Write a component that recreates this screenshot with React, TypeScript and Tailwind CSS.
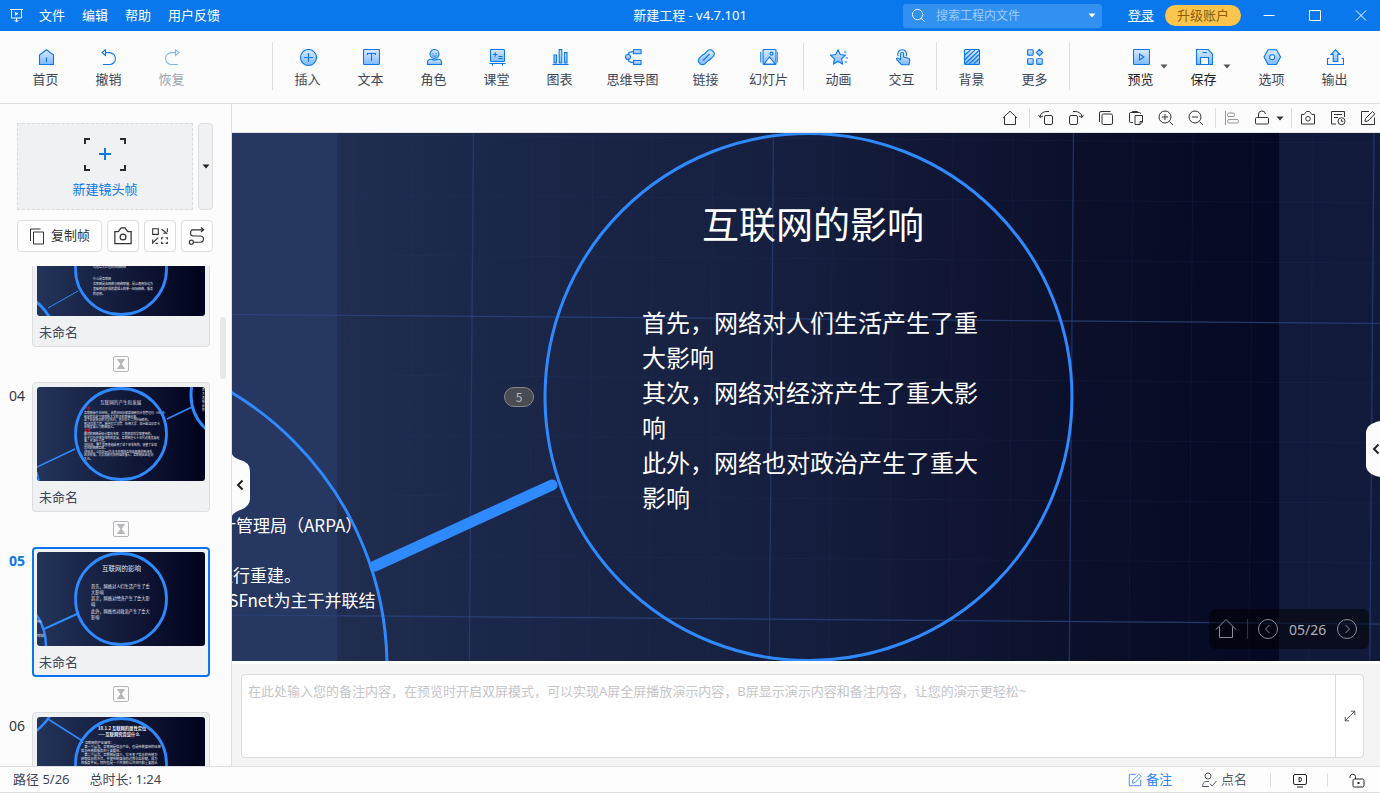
import type { ReactNode } from "react";

const BLUE = "#0a78ec";
const ARC = "#2f89ff";

/* ---------- toolbar icons ---------- */

function Duo({ children }: { children: ReactNode }) {
  return (
    <svg width="18" height="18" viewBox="0 0 18 18" fill="none" stroke={BLUE} strokeWidth="1.1" aria-hidden="true">
      {children}
    </svg>
  );
}

const FILL = "url(#duo)";

const icons: Record<string, ReactNode> = {
  home: (
    <Duo>
      <path d="M2.5 6 9.5.7 16.5 6v9.5h-14z" fill={FILL} />
      <path d="M9.5 8.5v4.5" />
    </Duo>
  ),
  undo: (
    <Duo>
      <path d="M5.5.8 2 3.6l3.5 2.9z" />
      <path d="M5.5 3.6h4a5.9 5.9 0 0 1 0 11.9H3" />
    </Duo>
  ),
  redo: (
    <Duo>
      <path d="M12.5.8 16 3.6l-3.5 2.9z" />
      <path d="M12.5 3.6h-4a5.9 5.9 0 0 0 0 11.9H15" />
    </Duo>
  ),
  insert: (
    <Duo>
      <circle cx="9.5" cy="8.5" r="8" fill={FILL} />
      <path d="M9.5 4v9M5 8.5h9" />
    </Duo>
  ),
  text: (
    <Duo>
      <rect x="1.5" y=".5" width="16" height="15" rx="1" fill={FILL} />
      <path d="M5.5 6V4.5h8V6M9.5 4.5V12" />
    </Duo>
  ),
  role: (
    <Duo>
      <circle cx="9.5" cy="5" r="4.5" fill={FILL} />
      <path d="M8 4v1.2M11 4v1.2M7.6 6.6q1.9 1.6 3.8 0" strokeWidth=".9" />
      <path d="M2.5 15.5v-2.2a3 3 0 0 1 3-3h1q3 1.6 6 0h1a3 3 0 0 1 3 3v2.2z" fill={FILL} />
    </Duo>
  ),
  lesson: (
    <Duo>
      <rect x="2.5" y=".5" width="14" height="12" rx="1" fill={FILL} />
      <path d="M5 5.5h4.5M7.2 3.2v4.6M10.5 7.5h4M10.5 9.5h4M1.5 14.5h16M4.5 14.5v2.3M14.5 14.5v2.3" />
    </Duo>
  ),
  chart: (
    <Duo>
      <path d="M3 6h2.6v8H3zM8.2.6h2.6V14H8.2zM13.4 3.6H16V14h-2.6z" fill={FILL} />
      <path d="M1.5 15.5h16" />
    </Duo>
  ),
  mind: (
    <Duo>
      <rect x="9.5" y=".7" width="7.5" height="4" fill={FILL} />
      <rect x="9.5" y="11.5" width="7.5" height="4" fill={FILL} />
      <circle cx="4" cy="8" r="2.5" fill={FILL} />
      <path d="M9.5 2.6C6 2.6 4.5 3.5 4 5.5M9.5 13.5C6 13.5 4.5 12.5 4 10.5" />
    </Duo>
  ),
  link: (
    <Duo>
      <path d="m2.3 9.2 3-3a3 3 0 0 1 1.7-.8l3.6-3.6a3.5 3.5 0 0 1 5 0l.7.8a3.5 3.5 0 0 1 0 4.7L13 10.5a3 3 0 0 1-1.7.9l-3.5 3.4a3.3 3.3 0 0 1-4.7 0l-.8-.9a3.3 3.3 0 0 1 0-4.7z" fill={FILL} />
      <path d="m6 11.5 6.5-6.5" />
    </Duo>
  ),
  slides: (
    <Duo>
      <rect x="3" y=".5" width="13" height="15" rx="1" fill={FILL} />
      <path d="m4 15 5.5-7 5.5 7z" fill="#fcfcfc" />
      <circle cx="11.5" cy="4.6" r="1.5" />
      <path d="M.8 3v10.5M17.8 3v10.5" />
    </Duo>
  ),
  star: (
    <Duo>
      <path d="m8 .8 2.2 4.7 5.2.7-3.8 3.6.9 5.2L8 12.500 3.5 15l.9-5.2L.6 6.2l5.2-.7z" fill={FILL} />
      <path d="M14 3h2.5M15.5 9H18M14.5 13H17" />
    </Duo>
  ),
  touch: (
    <Duo>
      <path d="M5.2 7.3a4.5 4.500 0 1 1 8 0" />
      <path d="M7.6 4.7a1.5 1.5 0 0 1 3 0V8l5 1.3q1.4.5 1.2 2l-.8 4.4H8.500L4 11q-1-1.300.2-1.900 1-.5 2 .6l1.400 1z" fill={FILL} />
    </Duo>
  ),
  backdrop: (
    <Duo>
      <rect x="1.5" y=".5" width="15" height="15" rx="1" fill={FILL} />
      <path d="M2 6 7.5.8M2 10.5 12 .8M2 15 16 1.5M6 15.2 16 5.5M10.5 15.2 16 10" />
    </Duo>
  ),
  more: (
    <Duo>
      <rect x="1.6" y=".7" width="5.6" height="5.6" rx=".8" fill={FILL} />
      <path d="m13.5.3 3.2 3.2-3.2 3.2-3.2-3.2z" fill={FILL} />
      <rect x="1.6" y="9.8" width="5.6" height="5.6" rx=".8" fill={FILL} />
      <rect x="10.7" y="9.8" width="5.6" height="5.6" rx=".8" fill={FILL} />
    </Duo>
  ),
  preview: (
    <Duo>
      <rect x="1.5" y=".5" width="16" height="15" rx="1" fill={FILL} />
      <path d="M7.5 5v6l4.500-3z" />
    </Duo>
  ),
  save: (
    <Duo>
      <path d="M1.500.5H13l4.500 4.500v10.500h-16z" fill={FILL} />
      <path d="M5.500 15.500v-7h8v7z" fill="#fcfcfc" />
      <path d="M7.500 3.500H12" />
    </Duo>
  ),
  option: (
    <Duo>
      <path d="M5 .7h8.500l4 7.300-4 7.500H5L1 8z" fill={FILL} />
      <circle cx="9.2" cy="8.2" r="2.500" fill="#fcfcfc" />
    </Duo>
  ),
  exportFile: (
    <Duo>
      <path d="M9.500.8 14 5.500h-2.200v7H7.200v-7H5z" fill={FILL} />
      <path d="M3.500 9.500h-2v6h16v-6h-2" />
    </Duo>
  ),
};

function Caret({ className = "text-[#555]" }: { className?: string }) {
  return (
    <svg width="8" height="5" viewBox="0 0 8 5" className={className} fill="currentColor" aria-hidden="true">
      <path d="M.5.5h7L4 4.500z" />
    </svg>
  );
}

function Tool({ icon, label, wide, disabled, strong, menu }: { icon: string; label: string; wide?: boolean; disabled?: boolean; strong?: boolean; menu?: boolean }) {
  return (
    <button
      type="button"
      disabled={disabled}
      className={`relative flex flex-col items-center gap-0.5 pt-[18px] shrink-0 ${wide ? "w-[83px]" : "w-[63px]"} ${disabled ? "opacity-50" : ""} ${strong ? "text-[#1b1d22]" : "text-[#3d4659]"}`}
    >
      {icons[icon]}
      <span className="leading-5">{label}</span>
      {menu && (
        <span className="absolute right-1 top-[33px]">
          <Caret />
        </span>
      )}
    </button>
  );
}

const Rule = () => <span className="w-px h-12 mx-[3px] mt-[11px] bg-[#dddee1] shrink-0" />;

/* ---------- small line icons ---------- */

function Line({ children, size = 16 }: { children: ReactNode; size?: number }) {
  return (
    <svg width={size} height={size} viewBox="0 0 16 16" fill="none" stroke="currentColor" aria-hidden="true">
      {children}
    </svg>
  );
}

const lineIcons: Record<string, ReactNode> = {
  home: <path d="M1 7.8 8 1.2l7 6.6M2.5 6.500v8h11v-8" />,
  rotateLeft: <><rect x="6.5" y="5.5" width="8" height="9" rx="1.5" /><path d="M11 1.5H9Q3 1.5 2 7M.5 4.8 2 7.5l3-1.5" /></>,
  rotateRight: <><rect x="1.5" y="5.5" width="8" height="9" rx="1.5" /><path d="M5 1.5h2q6 0 7 5.5M15.5 4.8 14 7.5 11 6" /></>,
  copy: <><rect x="4" y="4" width="10.5" height="10.5" rx="1.5" /><path d="M1.5 12V3a1.5 1.5 0 0 1 1.5-1.5h9.5" /></>,
  paste: <><path d="M5 12.5H2.5a1 1 0 0 1-1-1v-8a1 1 0 0 1 1-1h9a1 1 0 0 1 1 1V4M4.5 2.5v-1h5v1" /><path d="M7 5.5h7.5V12L12 14.5H7zM14.5 11.5H12v3" /></>,
  zoomIn: <><circle cx="7" cy="7" r="6" /><path d="m11.5 11.5 3.5 3.5M4 7h6M7 4v6" /></>,
  zoomOut: <><circle cx="7" cy="7" r="6" /><path d="m11.5 11.5 3.5 3.5M4 7h6" /></>,
  align: <><path d="M1.5 1v14" /><rect x="3.5" y="3" width="7" height="3.5" rx="1.5" /><rect x="3.5" y="9.5" width="11" height="3.5" rx="1.5" /></>,
  unlock: <><rect x="1.5" y="7.5" width="13" height="6.5" rx="1" /><path d="M4.5 7.5V5a3.5 3.5 0 0 1 7-1" /></>,
  camera: <><path d="M1.5 4.5h2.7L6.5 1.5h3l2.3 3h2.7v9.500h-13z" /><circle cx="8" cy="8.8" r="2.3" /></>,
  record: <><path d="M6 14H1.5V1.5h13V7M4 4.5h8M4 7.5h4" /><circle cx="11.5" cy="11.2" r="3.5" /><path d="M11.5 9.3v2h1.800" /></>,
  edit: <><path d="M9 1.5H1.5V14.5h13V7.5" /><path d="M5 11.5 5.5 8.5 12.5 1.5l2.3 2.3L8 11z" /></>,
  frames: (
    <>
      <path d="M1.5 1.5h5v5h-5z" />
      <path d="M9.500 11V9.500H11M13 9.500h1.500V11M14.500 13v1.500H13M11 14.500H9.500V13" />
      <path d="m9.500 2 5 4M14.500 1v3.500M11 5.500h2M1.500 14l5-4.500M1.500 11v4M4 14.500h2" />
    </>
  ),
  route: <><path d="M3 2.500h11M11.500.5l2.500 2-2.500 2M4.500 2.500a2.800 2.800 0 0 0 0 5.500h6.500a2.700 2.700 0 0 1 0 5.500H5" /><circle cx="3" cy="13.500" r="1.800" /></>,
  present: <><rect x="1.5" y="2.5" width="13" height="10" rx="1.5" /><path d="M7 5.5h1q1.5 0 1.5 2t-1.5 2H7zM5 15h6" /></>,
  expand: <path d="M9 2.5h4.5V7M13.500 2.500l-11 11M2.5 9v4.5H7" />,
  person: <><circle cx="7" cy="4" r="3" /><path d="M8 9.5H5Q2 9.5 1.5 14.5H8M9 11.5l2 2.5 4.5-5" /></>,
  padlock: <><rect x="4" y="7" width="11" height="8" rx="1.5" /><path d="M6.5 7V4.5a2.800 2.800 0 0 0-5.500 0V6" /><path d="M9.5 10v2" strokeWidth="2" /></>,
};

function Mini({ icon, label, muted }: { icon: string; label: string; muted?: boolean }) {
  return (
    <button type="button" aria-label={label} className={`w-[30px] h-6 flex items-center justify-center ${muted ? "text-[#96979a]" : "text-[#333]"}`}>
      <Line>{lineIcons[icon]}</Line>
    </button>
  );
}

const MiniRule = () => <span className="w-px h-5 ml-1 mr-px bg-[#dddee1]" />;

/* ---------- frame thumbnails ---------- */

function Lines({ rows, x, y, step, size }: { rows: string[]; x: number; y: number; step: number; size: number }) {
  return (
    <text fill="#e6e9f2" fontSize={size}>
      {rows.map((row, i) => (
        <tspan key={i} x={x} y={y + i * step}>{row}</tspan>
      ))}
    </text>
  );
}

const history = [
  "互联网始于1969年，由美国国防部高级研究计划管理局（ARPA）",
  "制定的协定下将四所大学的主机联接起来。",
  "这个协定由剑桥大学执行，在同年十二月开始联机。",
  "到1970年六月，麻省理工学院、哈佛大学、加州圣达莫尼卡",
  "系统发展公司相继加入。",
];
const growth = [
  "最初的网络是给计算机专家、工程师和科学家使用的。",
  "由于TCP/IP体系结构的发展，互联网在七十年代迅速发展起",
  "来，并进行重建。",
  "1983年，整个世界普遍采用了这个体系结构，促使了全球",
  "范围的网络互联。",
  "1986年，以NSFnet为主干并联结各地区网络的新体系",
  "逐步形成，大学和研究机构陆续接入，互联网由此走向",
  "大众。",
];

const thumbs: { id: string; art: ReactNode }[] = [
  {
    id: "03",
    art: (
      <>
        <circle cx="-30" cy="118" r="48" fill="none" stroke={ARC} strokeWidth="3" />
        <path d="M11 86 41 69" stroke={ARC} strokeWidth="1" />
        <Lines rows={["有着巨大价值的国际网络"]} x={56} y={46} step={4} size={3} />
        <Lines rows={["什么是互联网", "互联网是由网络与网络联接，是以通用协议为", "基础相连形成的逻辑上的单一国际网络，服务", "的总称。"]} x={56} y={58} step={5} size={3} />
      </>
    ),
  },
  {
    id: "04",
    art: (
      <>
        <circle cx="200" cy="8" r="46" fill="none" stroke={ARC} strokeWidth="3" />
        <path d="M0 80 38 62M130 32l25-12M0 85l2 9" stroke={ARC} strokeWidth="1.5" />
        <text x="63" y="16.5" fill="#d5d9e6" fontSize="4.6">互联网的产生和发展</text>
        <text x="47" y="23" fill="#e8101c" fontSize="3" fontWeight="700">产生</text>
        <Lines rows={history} x={47} y={27} step={3.5} size={2.9} />
        <text x="47" y="44.5" fill="#e8101c" fontSize="3" fontWeight="700">发展</text>
        <Lines rows={growth} x={47} y={48} step={3.5} size={2.9} />
        <Lines rows={["首", "大", "其", "响", "此", "影"]} x={165} y={4} step={4} size={3} />
      </>
    ),
  },
  {
    id: "05",
    art: (
      <>
        <circle cx="-46" cy="94" r="55" fill="none" stroke={ARC} strokeWidth="2.5" />
        <path d="M7 77 40 62" stroke={ARC} strokeWidth="2" />
        <text x="65" y="19" fill="#e2e5ef" fontSize="6.5">互联网的影响</text>
        <Lines rows={["首先，网络对人们生活产生了重", "大影响", "其次，网络对经济产生了重大影", "响", "此外，网络也对政治产生了重大", "影响"]} x={54} y={35.500} step={6.3} size={4.2} />
        <Lines rows={["RPA）", "", "", "并联结"]} x={-2} y={71} step={4.5} size={3} />
      </>
    ),
  },
  {
    id: "06",
    art: (
      <>
        <circle cx="-34" cy="-30" r="55" fill="none" stroke={ARC} strokeWidth="2.5" />
        <path d="m11 2 33 21" stroke={ARC} strokeWidth="1.5" />
        <text x="61" y="13" fill="#eef0f6" fontSize="4.3" fontWeight="700">
          10.1.2 互联网的属性定位
          <tspan x="61" y="19">——互联网究竟是什么</tspan>
        </text>
        <Lines rows={["▪ 互联网的产业属性：", "　第一个层次，互联网是信息产业，也是传统媒体的延伸", "信息传播和服务的重要载体。", "　第二个层次，互联网是媒介，它改变了信息的传播方", "获取信息的方式，并使传统媒体的边界日益模糊，成为", "性服务平台，同时也是一个开放的公共空间和重要舆论"]} x={44} y={27} step={4} size={3.200} />
      </>
    ),
  },
];

function FrameCard({ id, art, active, last }: { id: string; art: ReactNode; active: boolean; last: boolean }) {
  return (
    <li>
      <div className="flex">
        <span className={`w-8 pl-[9px] pt-1 shrink-0 leading-5 text-[14px] ${active ? "font-bold text-[#0a78ec]" : "text-[#33363c]"}`}>{id}</span>
        <button
          type="button"
          aria-label={`镜头帧 ${id}`}
          className={`w-[178px] h-[130px] rounded flex flex-col items-start text-left bg-[#f0f1f3] ${active ? "border-2 p-[3px] border-[#0a78ec]" : "border p-1 border-[#dcdde0]"}`}
        >
          <svg width="168" height="94" viewBox="0 0 168 94" className="rounded-[3px] shrink-0" fontFamily="Noto Sans CJK SC, sans-serif">
            <rect width="168" height="94" fill="url(#night)" />
            {art}
            <circle cx="84" cy="47" r="45.5" fill="none" stroke={ARC} strokeWidth="2.8" />
          </svg>
          <span className="pl-0.5 pt-1.5 leading-5 text-[#3d4659]">未命名</span>
        </button>
      </div>
      {!last && (
        <div className="h-[35px] pb-0.5 pl-[113px] flex items-center">
          <svg width="16" height="16" viewBox="0 0 16 16" fill="none" stroke="#b5b6b9" aria-hidden="true">
            <rect x=".5" y=".5" width="15" height="15" rx="1.5" />
            <path d="M4.5 3.5h7L8 8zM4.5 12.5h7L8 8z" fill="#b5b6b9" />
          </svg>
        </div>
      )}
    </li>
  );
}

/* ---------- stage ---------- */

const cells = Array.from({ length: 24 }, (_, i) => i - 2);

function Backdrop() {
  return (
    <svg className="absolute inset-0 w-full h-full" viewBox="0 0 1148 528" preserveAspectRatio="xMinYMin slice" aria-hidden="true">
      <defs>
        <linearGradient id="stage" x1="0" x2="1">
          <stop offset="0" stopColor="#243254" />
          <stop offset=".2" stopColor="#1c284a" />
          <stop offset=".5" stopColor="#151e3e" />
          <stop offset=".74" stopColor="#0b0f2a" />
          <stop offset="1" stopColor="#030520" />
        </linearGradient>
      </defs>
      <rect width="1148" height="528" fill="url(#stage)" />
      <rect width="105" height="528" fill="#263761" />
      <rect x="1047" width="101" height="528" fill="#121a3c" />
      <g transform="rotate(.45)">
        {cells.map((i) => (
          <path key={i} d={`M${i * 60 + 1} -20V560M-20 ${i * 60 + 1}H1170`} stroke="#2d4478" strokeOpacity=".15" />
        ))}
        <path d="M241.5-20V560M541.5-20V560M841.5-20V560M1142-20V560" stroke="#2c4580" strokeOpacity=".6" strokeWidth="1.3" />
        <path d="M-20 181.5H1170M-20 482H1170" stroke="#2c4580" strokeOpacity=".75" strokeWidth="1.2" />
      </g>
      <g fill="none" stroke={ARC} strokeWidth="3">
        <circle cx="-165" cy="534" r="320" />
        <circle cx="576.5" cy="264" r="263.5" />
        <path d="M143 433 320 352" strokeWidth="11" strokeLinecap="round" />
      </g>
    </svg>
  );
}

function Stage() {
  return (
    <section className="relative flex-1 overflow-hidden bg-[#151e3e] text-white font-['Noto_Sans_CJK_SC',sans-serif]">
      <Backdrop />
      <p className="absolute left-[-13px] top-[379px] text-[17px] leading-[25px] whitespace-nowrap">计管理局（ARPA）</p>
      <p className="absolute left-[-16px] top-[429px] text-[17px] leading-[25px] whitespace-nowrap">
        进行重建。
        <br />
        NSFnet为主干并联结
      </p>
      <h1 className="absolute left-[470px] top-[62px] text-[37px] leading-[56px] whitespace-nowrap">互联网的影响</h1>
      <p className="absolute left-[410px] top-[171px] w-[340px] text-[24px] leading-[35px]">
        首先，网络对人们生活产生了重
        <br />
        大影响
        <br />
        其次，网络对经济产生了重大影
        <br />
        响
        <br />
        此外，网络也对政治产生了重大
        <br />
        影响
      </p>
      <span className="absolute left-[272px] top-[254px] w-[30px] h-5 rounded-full border border-[#85878d] bg-[#4a4c53] text-[#b9babd] text-[12px] leading-[18px] text-center">5</span>

      <button type="button" aria-label="收起侧栏" className="absolute left-0 top-[321px]">
        <svg width="18" height="62" viewBox="0 0 18 62" fill="#fcfcfc">
          <path d="M0 0Q1 3 7 5.500 18 8 18 17V45Q18 53 7 56.500 1 59 0 62z" />
          <path d="m10.500 26.500-4.500 4.500 4.500 4.500" fill="none" stroke="#222" strokeWidth="2" />
        </svg>
      </button>
      <button type="button" aria-label="展开属性栏" className="absolute right-0 top-[288px]">
        <svg width="14" height="56" viewBox="0 0 14 56" fill="#fcfcfc">
          <path d="M14 0Q0 3 0 12V44Q0 53 14 56z" />
          <path d="m12.5 23.5-4.5 4.5 4.5 4.5" fill="none" stroke="#222" strokeWidth="2" />
        </svg>
      </button>

      <nav className="absolute right-[11px] bottom-3 h-10 w-40 rounded-md bg-black/50 flex items-center justify-between pl-1.5 pr-[11px] text-[#8b8d96]">
        <button type="button" aria-label="回到首页" className="flex">
          <svg width="22" height="22" viewBox="0 0 22 22" fill="none" stroke="currentColor">
            <path d="m1 11.500 10-10 10 10M4.500 9v10.500h13V9" />
          </svg>
        </button>
        <span className="w-px h-5 bg-[#34353c]" />
        <button type="button" aria-label="上一帧" className="flex">
          <svg width="22" height="22" viewBox="0 0 22 22" fill="none" stroke="currentColor">
            <circle cx="11" cy="11" r="9.5" />
            <path d="m12.5 7-4 4 4 4" />
          </svg>
        </button>
        <span className="text-[14px] text-[#b0b1b8] font-['Noto_Sans',sans-serif]">05/26</span>
        <button type="button" aria-label="下一帧" className="flex">
          <svg width="22" height="22" viewBox="0 0 22 22" fill="none" stroke="currentColor">
            <circle cx="11" cy="11" r="9.5" />
            <path d="m9.5 7 4 4-4 4" />
          </svg>
        </button>
      </nav>
    </section>
  );
}

/* ---------- page parts ---------- */

function TitleBar() {
  return (
    <header className="h-[31px] shrink-0 bg-[#0a78ec] text-white flex items-center relative">
      <svg width="15" height="15" viewBox="0 0 15 15" fill="none" stroke="currentColor" className="ml-[9px]" aria-hidden="true">
        <path d="M1 1.5h13M2.5 1.5v8.500h10V1.5M7.5 10v4M5.5 12l2 2 2-2" />
        <path d="M6 3.8v4l3.5-2z" fill="currentColor" stroke="none" />
      </svg>
      <nav className="flex gap-[17px] ml-[15px]">
        <button type="button">文件</button>
        <button type="button">编辑</button>
        <button type="button">帮助</button>
        <button type="button">用户反馈</button>
      </nav>
      <span className="absolute left-1/2 -translate-x-1/2">新建工程 - v4.7.101</span>
      <div className="ml-auto w-[199px] h-6 rounded-[3px] bg-[#3290f0] flex items-center pl-2 pr-1.5 text-white">
        <Line size={15}>
          <circle cx="7" cy="7" r="5.5" />
          <path d="m11 11 3.5 3.5" />
        </Line>
        <input aria-label="搜索" placeholder="搜索工程内文件" className="flex-1 min-w-0 ml-2.5 bg-transparent text-[12px] outline-none placeholder:text-[#9bccfa]" />
        <button type="button" aria-label="搜索选项">
          <Caret className="text-white" />
        </button>
      </div>
      <a href="#login" className="ml-[26px] underline underline-offset-1">登录</a>
      <button type="button" className="ml-[11px] w-[76px] h-[21px] rounded-full bg-[#fbc44c] text-[#8c5d0d] leading-[21px]">升级账户</button>
      <div className="flex ml-3 gap-[14px] pr-[3px]">
        <button type="button" aria-label="最小化" className="w-8 flex justify-center">
          <Line><path d="M2.5 7.5h11" /></Line>
        </button>
        <button type="button" aria-label="最大化" className="w-8 flex justify-center">
          <Line><path d="M2.5 2.5h11v10h-11z" /></Line>
        </button>
        <button type="button" aria-label="关闭" className="w-8 flex justify-center">
          <Line><path d="m3 2.5 10 10M13 2.5l-10 10" /></Line>
        </button>
      </div>
    </header>
  );
}

function ToolBar() {
  return (
    <div className="h-[73px] shrink-0 border-b border-[#dddee1] flex pl-[14px] pr-[14px]">
      <Tool icon="home" label="首页" />
      <Tool icon="undo" label="撤销" />
      <Tool icon="redo" label="恢复" disabled />
      <span className="w-[66px]" />
      <Rule />
      <Tool icon="insert" label="插入" />
      <Tool icon="text" label="文本" />
      <Tool icon="role" label="角色" />
      <Tool icon="lesson" label="课堂" />
      <Tool icon="chart" label="图表" />
      <Tool icon="mind" label="思维导图" wide />
      <Tool icon="link" label="链接" />
      <Tool icon="slides" label="幻灯片" />
      <Rule />
      <Tool icon="star" label="动画" />
      <Tool icon="touch" label="交互" />
      <Rule />
      <Tool icon="backdrop" label="背景" />
      <Tool icon="more" label="更多" />
      <Rule />
      <div className="ml-auto flex">
        <Tool icon="preview" label="预览" strong menu />
        <Tool icon="save" label="保存" strong menu />
        <span className="w-[5px]" />
        <Tool icon="option" label="选项" />
        <Tool icon="exportFile" label="输出" />
      </div>
    </div>
  );
}

function Sidebar() {
  const box = "h-8 rounded border border-[#dddee1] bg-white flex items-center justify-center text-[#333]";
  return (
    <aside className="w-[232px] shrink-0 border-r border-[#dddee1] flex flex-col pt-[19px]">
      <div className="flex gap-[5px] pl-[17px] pr-[18px] h-[87px]">
        <button type="button" className="flex-1 border border-dashed border-[#d9dadd] bg-[#f0f1f3] flex flex-col items-center pt-[14px] gap-2 text-[#0a78ec]">
          <svg width="42" height="33" viewBox="0 0 42 33" fill="none" stroke="#2a2b2e" strokeWidth="2" aria-hidden="true">
            <path d="M1 6V1h5M36 1h5v5M41 27v5h-5M6 32H1v-5" />
            <path d="M21 10v12M15 16h12" stroke={BLUE} />
          </svg>
          <span className="leading-5">新建镜头帧</span>
        </button>
        <button type="button" aria-label="更多镜头帧" className="w-[15px] rounded border border-[#dddee1] bg-[#f0f1f3] flex items-center justify-center">
          <Caret className="text-[#222]" />
        </button>
      </div>
      <div className="flex gap-[5px] pl-[17px] pr-[18px] mt-2.5">
        <button type="button" className={`${box} flex-1 gap-1.5 text-[#222]`}>
          <svg width="16" height="17" viewBox="0 0 16 17" fill="none" stroke="currentColor" aria-hidden="true">
            <path d="M4.5 4h10v12h-10zM1.5 13V1h10" />
          </svg>
          复制帧
        </button>
        <button type="button" aria-label="拍照" className={`${box} w-8`}><Line size={20}>{lineIcons.camera}</Line></button>
        <button type="button" aria-label="替换" className={`${box} w-8`}><Line size={18}>{lineIcons.frames}</Line></button>
        <button type="button" aria-label="路径" className={`${box} w-8`}><Line size={18}>{lineIcons.route}</Line></button>
      </div>
      <div className="relative flex-1 min-h-0 mt-[14px] overflow-hidden">
        <ul className="-mt-[49px]">
          {thumbs.map((t, i) => (
            <FrameCard key={t.id} id={t.id} art={t.art} active={t.id === "05"} last={i === thumbs.length - 1} />
          ))}
        </ul>
        <span className="absolute right-[5px] top-[51px] w-1.5 h-[62px] rounded-sm bg-[#e8e8ea]" />
      </div>
    </aside>
  );
}

function Notes() {
  return (
    <div className="shrink-0 border-t-[3px] border-white bg-[#f4f4f4] pt-2.5 pb-2 pl-[9px] pr-4">
      <div className="h-[84px] rounded border border-[#d8dbe0] bg-white flex">
        <textarea
          aria-label="备注"
          placeholder="在此处输入您的备注内容，在预览时开启双屏模式，可以实现A屏全屏播放演示内容，B屏显示演示内容和备注内容，让您的演示更轻松~"
          className="flex-1 resize-none bg-transparent px-1.5 pt-1.5 leading-5 outline-none placeholder:text-[#c5c6c9]"
        />
        <button type="button" aria-label="展开备注" className="w-7 border-l border-[#d8dbe0] flex items-center justify-center text-[#444]">
          <Line size={14}>{lineIcons.expand}</Line>
        </button>
      </div>
    </div>
  );
}

function StatusBar() {
  return (
    <footer className="h-[27px] shrink-0 border-y border-[#dddee1] bg-[#fdfdfd] flex items-center pl-[13px] pr-[15px] text-[#3d4659]">
      <span>路径 5/26</span>
      <span className="ml-5">总时长: 1:24</span>
      <button type="button" className="ml-auto flex items-center gap-1 text-[#2a86f5]">
        <Line size={14}>{lineIcons.edit}</Line>
        备注
      </button>
      <button type="button" className="ml-[29px] flex items-center gap-1 text-[#555b66]">
        <Line>{lineIcons.person}</Line>
        点名
      </button>
      <span className="w-px h-3.5 bg-[#dddee1] ml-[23px]" />
      <button type="button" aria-label="放映" className="ml-[21px] text-[#222]"><Line>{lineIcons.present}</Line></button>
      <span className="w-px h-3.5 bg-[#dddee1] ml-[19px]" />
      <button type="button" aria-label="锁定" className="ml-[21px] text-[#222]"><Line>{lineIcons.padlock}</Line></button>
    </footer>
  );
}

export default function App() {
  return (
    <div className="h-screen flex flex-col overflow-hidden bg-[#fcfcfc] text-[13px] font-['Noto_Sans','Noto_Sans_CJK_SC',sans-serif]">
      <svg width="0" height="0" className="absolute" aria-hidden="true">
        <defs>
          <linearGradient id="duo" x1="0" y1="0" x2="0" y2="1">
            <stop offset="0" stopColor="#dceafe" />
            <stop offset="1" stopColor="#7fb9fb" />
          </linearGradient>
          <linearGradient id="night" x1="0" x2="1">
            <stop offset="0" stopColor="#23345a" />
            <stop offset=".5" stopColor="#131b3b" />
            <stop offset="1" stopColor="#01021b" />
          </linearGradient>
        </defs>
      </svg>
      <TitleBar />
      <ToolBar />
      <div className="flex-1 min-h-0 flex">
        <Sidebar />
        <main className="flex-1 min-w-0 flex flex-col">
          <div className="h-[29px] shrink-0 border-b border-[#e3e4e6] flex items-center justify-end mr-[-3px]">
            <Mini icon="home" label="首页" />
            <MiniRule />
            <Mini icon="rotateLeft" label="向左旋转" />
            <Mini icon="rotateRight" label="向右旋转" />
            <Mini icon="copy" label="复制" />
            <Mini icon="paste" label="粘贴" />
            <Mini icon="zoomIn" label="放大" />
            <Mini icon="zoomOut" label="缩小" />
            <MiniRule />
            <Mini icon="align" label="对齐" muted />
            <Mini icon="unlock" label="解锁" />
            <button type="button" aria-label="解锁选项" className="w-2.5 h-6 flex items-center justify-center -ml-0.5 mr-0.5">
              <Caret className="text-[#333]" />
            </button>
            <MiniRule />
            <Mini icon="camera" label="截图" />
            <Mini icon="record" label="历史" />
            <Mini icon="edit" label="编辑" />
          </div>
          <Stage />
          <Notes />
        </main>
      </div>
      <StatusBar />
    </div>
  );
}
